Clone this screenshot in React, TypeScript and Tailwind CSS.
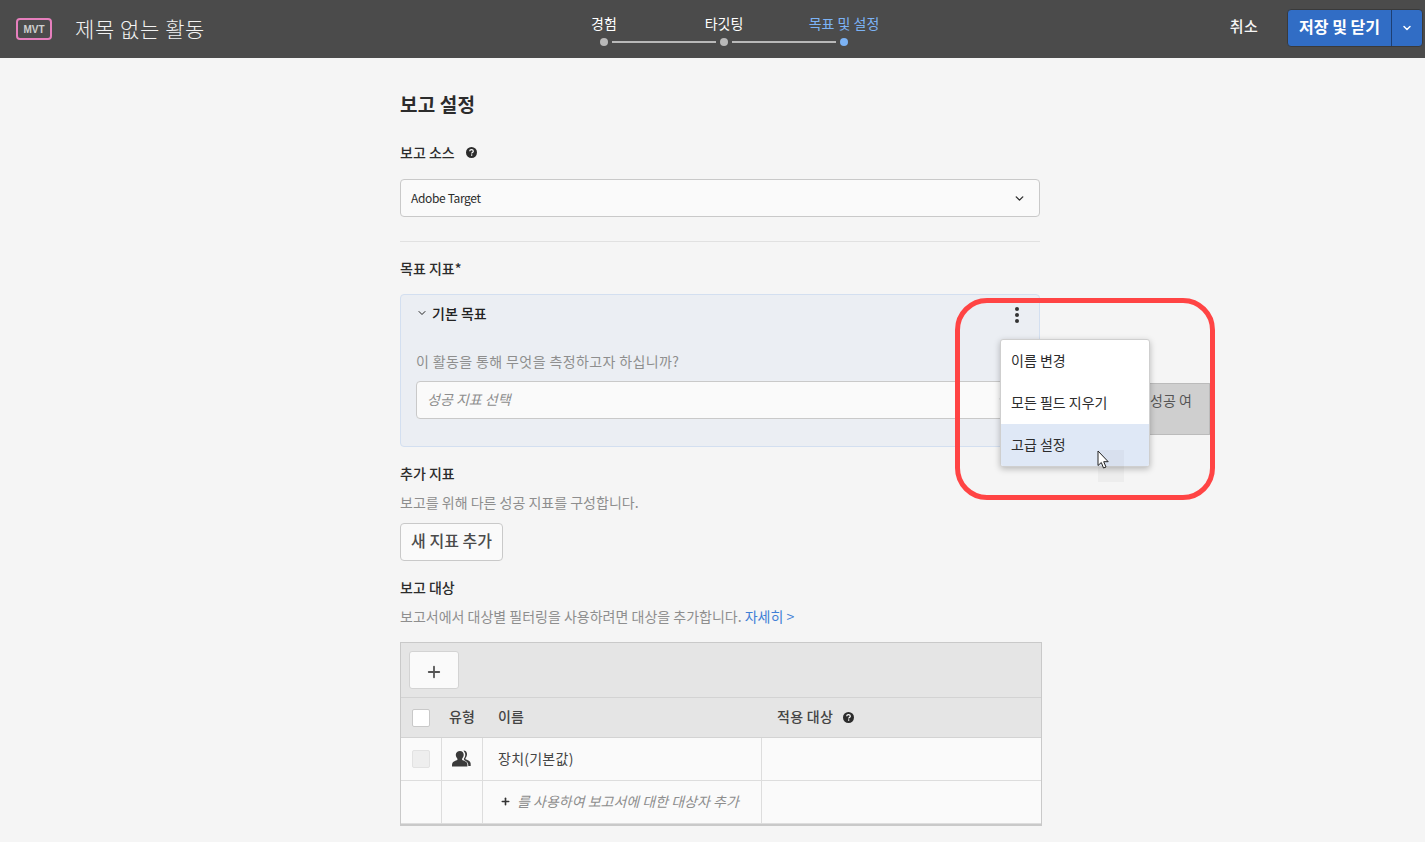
import { ChevronDown, Plus } from 'lucide-react'

const font = "font-['Noto_Sans_CJK_KR','Noto_Sans',sans-serif]"

function HelpIcon() {
  return (
    <svg width="11" height="11" viewBox="0 0 11 11">
      <circle cx="5.5" cy="5.5" r="5.5" fill="#2c2c2c" />
      <path d="M3.7 4.3c0-1 .8-1.6 1.8-1.6s1.8.6 1.8 1.5c0 1.3-1.700 1.200-1.700 2.400" fill="none" stroke="#fff" strokeWidth="1.2" />
      <rect x="5" y="7.4" width="1.3" height="1.3" fill="#fff" />
    </svg>
  )
}

function UsersIcon() {
  return (
    <svg width="19" height="17" viewBox="0 0 19 17" fill="#3a3a3a">
      <path d="M11.500 0.500c2.400 0 3.700 1.800 3.500 4-.1 1.500-.7 2.800-1.500 3.600v1.200c1.600.7 4.600 1.600 5 3.400.2 1 .2 2.500.2 3.300h-2.400c0-2.500-.6-4-3-5.200-1-.5-1.400-.9-1.400-1.800 0-.7.6-1.200 1-2.200.5-1.400.5-3.100-.2-4.200-.4-.8-1-1.400-1.200-2.100z" />
      <path d="M8 1c2.400 0 3.900 1.800 3.700 4.100-.1 1.500-.7 2.700-1.600 3.600v1.300c1.800.7 4.400 1.500 5 3.100.3.900.3 2.100.3 3.400H0c0-1.300 0-2.500.4-3.400.6-1.600 3.200-2.400 5-3.100V8.700C4.500 7.800 3.900 6.600 3.800 5.100 3.600 2.800 5.600 1 8 1z" />
    </svg>
  )
}

function Cursor() {
  return (
    <svg width="12" height="20" viewBox="0 0 12 20">
      <path d="M1 1v14.500l3.300-3 2.200 5.500 2.500-1-2.300-5.300h4.500z" fill="#fff" stroke="#222" strokeWidth="1" strokeLinejoin="round" />
    </svg>
  )
}

function Step({ label, active }: { label: string; active?: boolean }) {
  return (
    <div className="relative w-2 h-2">
      <span className={`absolute left-1/2 -translate-x-1/2 -top-[25px] whitespace-nowrap text-[14px] leading-[20px] ${active ? 'text-[#7cb3f5]' : 'text-white'}`}>
        {label}
      </span>
      <div className={`w-2 h-2 rounded-full ${active ? 'bg-[#7cb3f5]' : 'bg-[#b9b9b9]'}`} />
    </div>
  )
}

function Header() {
  return (
    <header className="h-[58px] bg-[#4b4b4b] flex items-center pl-4 relative">
      <div className="w-9 h-[22px] border-2 border-[#e67fbd] rounded-[4px] flex items-center justify-center text-[#cfcfcf] text-[10px] font-bold font-['Liberation_Sans',sans-serif]">
        MVT
      </div>
      <h1 className="ml-[23px] -mt-[2px] text-[21px] leading-[28px] text-[#f2f2f2] font-light tracking-[0.6px]">제목 없는 활동</h1>

      <div className="absolute left-[600px] top-[38px] flex items-center">
        <Step label="경험" />
        <div className="w-[104px] h-0.5 mx-1 bg-[#b9b9b9]" />
        <Step label="타깃팅" />
        <div className="w-[104px] h-0.5 mx-1 bg-[#b9b9b9]" />
        <Step label="목표 및 설정" active />
      </div>

      <div className="ml-auto flex items-center mr-[2px] -mt-[3px]">
        <span className="text-[15px] leading-[20px] pb-[3px] text-[#f5f5f5] font-medium mr-[29px] tracking-[0.3px]">취소</span>
        <div className="h-[38px] w-[136px] flex bg-[#316dc5] border border-[#3a3a3a] rounded-[4px] text-white">
          <span className="w-[104px] pb-[4px] flex items-center justify-center text-[16px] font-bold border-r border-[#1d3f73]">저장 및 닫기</span>
          <span className="flex-1 flex items-center justify-center"><ChevronDown size={12} strokeWidth={3} /></span>
        </div>
      </div>
    </header>
  )
}

function Row({ check, icon, name }: { check?: React.ReactNode; icon?: React.ReactNode; name: React.ReactNode }) {
  return (
    <div className="flex h-[43px] border-b border-[#dddddd] bg-[#fafafa]">
      <div className="w-[41px] border-r border-[#dddddd] flex items-center justify-center pr-[1px]">{check}</div>
      <div className="w-[41px] border-r border-[#dddddd] flex items-center justify-center pr-[2px] pb-[2px]">{icon}</div>
      <div className="w-[279px] border-r border-[#dddddd] flex items-center pl-[15px] pb-[2px]">{name}</div>
      <div className="flex-1" />
    </div>
  )
}

export default function App() {
  return (
    <div className={`${font} h-[842px] overflow-hidden bg-[#f5f5f5] text-[#2c2c2c]`}>
      <Header />
      <main className="relative w-[642px] ml-[400px] pt-[33px] text-[14px]">
        <h2 className="text-[19px] tracking-[0.2px] leading-[26px] font-bold">보고 설정</h2>

        <div className="mt-[25px] h-[20px] flex items-center gap-[11px] font-medium leading-[20px]">
          보고 소스 <HelpIcon />
        </div>

        <div className="mt-[17px] w-[640px] h-[38px] px-[10px] flex items-center justify-between bg-[#fafafa] border border-[#c9c9c9] rounded-[4px] text-[12px]">
          <span className="tracking-[-0.35px]">Adobe Target</span>
          <ChevronDown size={13} strokeWidth={2.5} className="mr-[3px]" />
        </div>

        <div className="mt-[24px] w-[640px] border-t border-[#e1e1e1]" />

        <div className="mt-[16px] h-[20px] font-medium leading-[20px]">목표 지표*</div>

        <section className="relative mt-[16px] w-[640px] h-[153px] bg-[#ebeef3] border border-[#d3dff0] rounded-[4px] px-[15px]">
          <div className="mt-[8px] h-[20px] flex items-center gap-[4px] font-medium leading-[20px] text-[#222]">
            <ChevronDown size={12} strokeWidth={2} />
            기본 목표
          </div>
          <div className="mt-[28px] h-[20px] leading-[20px] text-[#8e8e8e] tracking-[0.38px]">이 활동을 통해 무엇을 측정하고자 하십니까?</div>
          <div className="mt-[10px] h-[38px] w-[608px] pl-[10px] pr-[13px] flex items-center justify-between bg-[#fafafa] border border-[#c9c9c9] rounded-[4px] text-[#8e8e8e]">
            <span className="italic pb-[2px]">성공 지표 선택</span>
            <ChevronDown size={13} strokeWidth={2.5} />
          </div>
          <div className="absolute right-[20px] top-[12px] flex flex-col gap-[2px]">
            <span className="w-1 h-1 rounded-full bg-[#333]" />
            <span className="w-1 h-1 rounded-full bg-[#333]" />
            <span className="w-1 h-1 rounded-full bg-[#333]" />
          </div>
        </section>

        <div className="mt-[16px] h-[20px] font-medium leading-[20px]">추가 지표</div>
        <div className="mt-[9px] h-[20px] leading-[20px] text-[#8e8e8e]">보고를 위해 다른 성공 지표를 구성합니다.</div>
        <button className="mt-[11px] h-[38px] w-[103px] pb-[4px] bg-[#fafafa] border border-[#c9c9c9] rounded-[4px] text-[16px] font-medium text-[#4b4b4b]">
          새 지표 추가
        </button>

        <div className="mt-[16px] h-[20px] font-medium leading-[20px]">보고 대상</div>
        <div className="mt-[9px] h-[20px] leading-[20px] text-[#8e8e8e]">
          보고서에서 대상별 필터링을 사용하려면 대상을 추가합니다. <span className="text-[#3f7fd6]">자세히 &gt;</span>
        </div>

        <div className="mt-[16px] w-[642px] border border-[#c9c9c9] border-b-2">
          <div className="h-[55px] bg-[#e5e5e5] border-b border-[#d3d3d3] pl-2 pt-2">
            <div className="w-[50px] h-[38px] bg-[#fafafa] border border-[#d3d3d3] rounded-[3px] flex items-center justify-center text-[#555] pr-[1px] pt-[3px]">
              <Plus size={18} strokeWidth={2.4} />
            </div>
          </div>
          <div className="h-[40px] flex items-center bg-[#e5e5e5] border-b border-[#d3d3d3] font-medium text-[#444]">
            <div className="w-[41px] flex justify-center pr-[1px]">
              <span className="w-[18px] h-[18px] bg-white border border-[#c9c9c9] rounded-[2px]" />
            </div>
            <div className="w-[41px] flex justify-center pb-[2px] pr-[1px]">유형</div>
            <div className="w-[279px] pl-[15px] pb-[2px]">이름</div>
            <div className="flex-1 pl-[15px] flex items-center gap-[10px] tracking-[0.3px]"><span className="pb-[2px]">적용 대상</span> <HelpIcon /></div>
          </div>
          <Row
            check={<span className="w-[18px] h-[18px] bg-[#eeeeee] border border-[#e2e2e2] rounded-[2px]" />}
            icon={<UsersIcon />}
            name={<span className="text-[#444] tracking-[0.25px]">장치(기본값)</span>}
          />
          <Row
            name={
              <span className="flex items-center text-[#8e8e8e]">
                <Plus size={11} strokeWidth={3.5} className="text-[#333] mr-[6px] ml-[2px]" />
                <span className="italic">를 사용하여 보고서에 대한 대상자 추가</span>
              </span>
            }
          />
        </div>

        {/* menu + red highlight sit over the form */}
        <div className="absolute left-[750px] top-[325px] w-[60px] h-[52px] bg-[#cfcfcf] border-y border-r border-[#bbb] text-[#555] flex pl-0 pt-[6px]">
          성공 여
        </div>
        <div className="absolute left-[600px] top-[281px] w-[150px] bg-white border border-[#cfcfcf] rounded-[3px] overflow-hidden shadow-[0_2px_6px_rgba(0,0,0,0.25)]">
          <div className="h-[42px] pl-[10px] pb-[2px] flex items-center">이름 변경</div>
          <div className="h-[42px] pl-[10px] pb-[2px] flex items-center">모든 필드 지우기</div>
          <div className="h-[42px] pl-[10px] pb-[2px] flex items-center bg-[#dfe8f6]">고급 설정</div>
        </div>
        <div className="absolute left-[698px] top-[392px] w-[26px] h-[32px] bg-black/[0.03]" />
        <div className="absolute left-[697px] top-[392px]"><Cursor /></div>
        <div className="absolute left-[555px] top-[240px] w-[260px] h-[202px] border-[5px] border-[#ff4444] rounded-[32px]" />
      </main>
    </div>
  )
}
